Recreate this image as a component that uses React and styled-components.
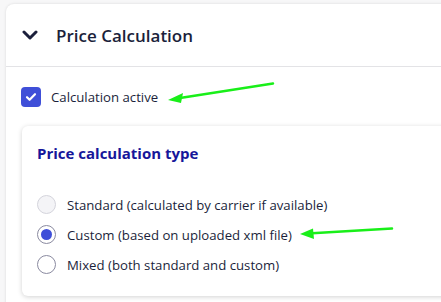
import React from "react";
import styled, { createGlobalStyle } from "styled-components";

const Global = createGlobalStyle`
  html, body { margin: 0; padding: 0; background: #f7f7f8; }
  body { font-family: "Open Sans", "Noto Sans", sans-serif; color: #1b1f3b; }
`;

const Page = styled.div`
  position: relative;
  width: 441px;
  height: 302px;
  overflow: hidden;
  padding: 4px 0 0 6px;
  box-sizing: border-box;
`;

const Card = styled.div`
  background: #fff;
  border-radius: 8px 0 0 0;
  box-shadow: 0 0 3px rgba(0,0,0,0.12);
  width: 460px;
  height: 320px;
  display: flex;
  flex-direction: column;
`;

const Header = styled.div`
  height: 63px;
  display: flex;
  align-items: center;
  gap: 18px;
  padding-left: 16px;
  border-bottom: 1px solid #e3e3e6;
  box-sizing: border-box;
`;

const Title = styled.h2`
  margin: 0;
  font-size: 17px;
  font-weight: 600;
  color: #1b1f3b;
`;

const Body = styled.div`
  padding: 20px 0 0 15px;
  display: flex;
  flex-direction: column;
  gap: 19px;
`;

const CheckRow = styled.label`
  display: flex;
  align-items: center;
  gap: 10px;
  font-size: 13.2px;
`;

const Box = styled.span`
  width: 20px;
  height: 20px;
  border-radius: 4px;
  background: #3f4fd8;
  display: flex;
  align-items: center;
  justify-content: center;
`;

const Inner = styled.div`
  background: #fff;
  margin-left: 1px;
  border-radius: 6px 0 0 6px;
  box-shadow: 0 1px 5px rgba(0,0,0,0.18);
  height: 170px;
  padding: 17px 0 0 15px;
  box-sizing: border-box;
`;

const SubTitle = styled.h3`
  margin: 0 0 32px;
  font-size: 15px;
  font-weight: 700;
  color: #16169a;
`;

const RadioList = styled.div`
  display: flex;
  flex-direction: column;
  gap: 11px;
`;

const RadioRow = styled.div`
  display: flex;
  align-items: center;
  gap: 11px;
  font-size: 13.2px;
  height: 19px;
`;

const Radio = styled.span`
  width: 19px;
  height: 19px;
  border-radius: 50%;
  box-sizing: border-box;
  border: 1px solid ${p => (p.$disabled ? "#d4d4dc" : "#8a8aa0")};
  background: ${p => (p.$disabled ? "#f4f4f7" : "#fff")};
  display: flex;
  align-items: center;
  justify-content: center;
  &::after {
    content: "";
    width: 11px;
    height: 11px;
    border-radius: 50%;
    background: #3f4fd8;
    display: ${p => (p.$checked ? "block" : "none")};
  }
`;

const Arrows = styled.svg`
  position: absolute;
  left: 0;
  top: 0;
  pointer-events: none;
`;

export default function App() {
  return (
    <>
      <Global />
      <Page>
        <Card>
          <Header>
            <svg width="16" height="10" viewBox="0 0 16 10">
              <path d="M2 2 L8 8 L14 2" fill="none" stroke="#1b1f3b" strokeWidth="3" strokeLinecap="round" strokeLinejoin="round" />
            </svg>
            <Title>Price Calculation</Title>
          </Header>
          <Body>
            <CheckRow>
              <Box>
                <svg width="12" height="10" viewBox="0 0 12 10">
                  <path d="M2 5.2 L4.6 7.8 L10 2.2" fill="none" stroke="#fff" strokeWidth="2.2" strokeLinecap="round" strokeLinejoin="round" />
                </svg>
              </Box>
              Calculation active
            </CheckRow>
            <Inner>
              <SubTitle>Price calculation type</SubTitle>
              <RadioList>
                <RadioRow><Radio $disabled />Standard (calculated by carrier if available)</RadioRow>
                <RadioRow><Radio $checked />Custom (based on uploaded xml file)</RadioRow>
                <RadioRow><Radio />Mixed (both standard and custom)</RadioRow>
              </RadioList>
            </Inner>
          </Body>
        </Card>
        <Arrows width="441" height="302">
          <line x1="273" y1="83.5" x2="180" y2="98" stroke="#19ef19" strokeWidth="2.5" strokeLinecap="round" />
          <polygon points="168,100 183,93 181,103" fill="#19ef19" />
          <line x1="392" y1="228.5" x2="312" y2="233.3" stroke="#19ef19" strokeWidth="2.5" strokeLinecap="round" />
          <polygon points="300,234 313,228.5 314,239" fill="#19ef19" />
        </Arrows>
      </Page>
    </>
  );
}
